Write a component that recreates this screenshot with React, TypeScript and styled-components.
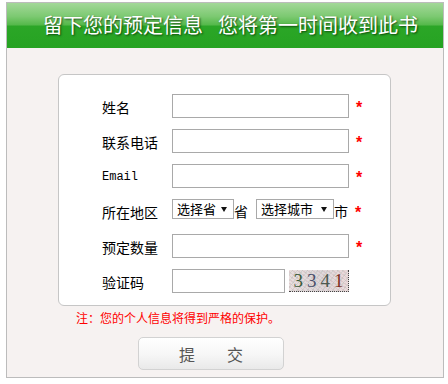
import React from "react";
import styled, { createGlobalStyle } from "styled-components";

const Global = createGlobalStyle`
  html, body { margin: 0; padding: 0; background: #ffffff; }
  body { font-family: "Noto Sans CJK SC", "Noto Sans", sans-serif; }
  * { box-sizing: border-box; }
`;

const Frame = styled.div`
  margin: 2px 0 0 6px;
  width: 438px;
  height: 376px;
  border: 1px solid #bcbcbc;
  background: #f6f2f1;
  display: flex;
  flex-direction: column;
`;

const Header = styled.div`
  height: 45px;
  flex: none;
  display: flex;
  align-items: center;
  gap: 15px;
  padding: 0 0 2px 36px;
  background: linear-gradient(
    to bottom,
    #a3d899 0%,
    #7cc971 30%,
    #56b94c 48%,
    #2ba627 52%,
    #26a322 100%
  );
  color: #ffffff;
  font-size: 20px;
  line-height: 24px;
  text-shadow: 1px 1px 2px rgba(0, 40, 0, 0.75);
`;

const Body = styled.div`
  display: flex;
  flex-direction: column;
  padding-top: 26px;
`;

const Card = styled.div`
  margin-left: 51px;
  width: 333px;
  height: 232px;
  border: 1px solid #c6c6c6;
  border-radius: 6px;
  background: #ffffff;
  padding: 19px 0 0 43px;
  display: grid;
  grid-template-columns: 70px auto;
  grid-auto-rows: 24px;
  row-gap: 11px;
  align-content: start;
`;

const Label = styled.div<{ $mono?: boolean }>`
  display: flex;
  align-items: center;
  font-family: ${(p) =>
    p.$mono ? `"Liberation Mono", monospace` : `"Noto Sans CJK SC", sans-serif`};
  font-size: ${(p) => (p.$mono ? "12px" : "14px")};
  color: #000;
  padding-top: 2px;
`;

const Field = styled.div`
  display: flex;
  align-items: center;
  font-size: 14px;
  color: #000;
`;

const Input = styled.input<{ $w?: number }>`
  width: ${(p) => p.$w ?? 177}px;
  height: 24px;
  border: 1px solid #a9a9a9;
  background: #fff;
  padding: 0 3px;
  margin: 0;
  outline: none;
  font-size: 13px;
`;

const Star = styled.span`
  margin-left: 7px;
  color: #ff0000;
  font-family: "Liberation Sans", sans-serif;
  font-weight: bold;
  font-size: 16px;
  line-height: 16px;
  padding-top: 4px;
`;

const SelectBox = styled.label<{ $w: number }>`
  align-self: flex-start;
  width: ${(p) => p.$w}px;
  height: 20px;
  border: 1px solid #a9a9a9;
  background: #fff;
  display: flex;
  align-items: center;
  padding: 0 6px 0 4px;
  gap: 4px;
`;

const Select = styled.select`
  appearance: none;
  -webkit-appearance: none;
  border: none;
  outline: none;
  background: transparent;
  padding: 0;
  margin: 0;
  flex: 1;
  min-width: 0;
  font-family: "Noto Sans CJK SC", sans-serif;
  font-size: 13px;
  line-height: 18px;
  color: #000;
`;

const Unit = styled.span<{ $gap?: number }>`
  margin-right: ${(p) => p.$gap ?? 0}px;
  font-size: 14px;
  line-height: 16px;
`;

const Captcha = styled.div`
  margin-left: 4px;
  width: 60px;
  height: 22px;
  display: flex;
  align-items: center;
  justify-content: center;
  gap: 4px;
  background:
    repeating-linear-gradient(37deg, rgba(200, 170, 175, 0.35) 0 1px, transparent 1px 3px),
    repeating-linear-gradient(-52deg, rgba(170, 190, 180, 0.35) 0 1px, transparent 1px 4px),
    linear-gradient(90deg, #e9dede, #ddd6d9 50%, #eadada);
  border-right: 1px dotted #444;
  border-bottom: 1px dotted #444;
  font-family: "Liberation Serif", serif;
  font-size: 19px;
  line-height: 20px;
  padding-top: 1px;
`;

const Digit = styled.span<{ $c: string }>`
  color: ${(p) => p.$c};
`;

const Note = styled.div`
  margin: 5px 0 0 69px;
  color: #ff0000;
  font-size: 12px;
  line-height: 14px;
`;

const Submit = styled.button`
  margin: 12px 0 0 131px;
  width: 146px;
  height: 33px;
  border: 1px solid #d2d2d2;
  border-radius: 5px;
  background: linear-gradient(to bottom, #ffffff 0%, #f6f6f6 55%, #e9e9e9 100%);
  color: #555;
  font-family: "Noto Sans CJK SC", sans-serif;
  font-size: 16px;
  line-height: 20px;
  padding: 0;
  cursor: pointer;
`;

const Arrow = () => (
  <svg width="6" height="5" viewBox="0 0 6 5">
    <path d="M0 0 H6 L3 5 Z" fill="#111" />
  </svg>
);

export default function App() {
  return (
    <>
      <Global />
      <Frame>
        <Header>
          <span>留下您的预定信息</span>
          <span>您将第一时间收到此书</span>
        </Header>
        <Body>
          <Card>
            <Label>姓名</Label>
            <Field>
              <Input />
              <Star>*</Star>
            </Field>

            <Label>联系电话</Label>
            <Field>
              <Input />
              <Star>*</Star>
            </Field>

            <Label $mono>Email</Label>
            <Field>
              <Input />
              <Star>*</Star>
            </Field>

            <Label>所在地区</Label>
            <Field>
              <SelectBox $w={62}>
                <Select>
                  <option>选择省</option>
                </Select>
                <Arrow />
              </SelectBox>
              <Unit $gap={8}>省</Unit>
              <SelectBox $w={78}>
                <Select>
                  <option>选择城市</option>
                </Select>
                <Arrow />
              </SelectBox>
              <Unit>市</Unit>
              <Star>*</Star>
            </Field>

            <Label>预定数量</Label>
            <Field>
              <Input />
              <Star>*</Star>
            </Field>

            <Label>验证码</Label>
            <Field>
              <Input $w={113} />
              <Captcha>
                <Digit $c="#3d5a3a">3</Digit>
                <Digit $c="#4a4f6a">3</Digit>
                <Digit $c="#4b5a50">4</Digit>
                <Digit $c="#7a2f24">1</Digit>
              </Captcha>
            </Field>
          </Card>
          <Note>注：您的个人信息将得到严格的保护。</Note>
          <Submit type="button">提　　交</Submit>
        </Body>
      </Frame>
    </>
  );
}
